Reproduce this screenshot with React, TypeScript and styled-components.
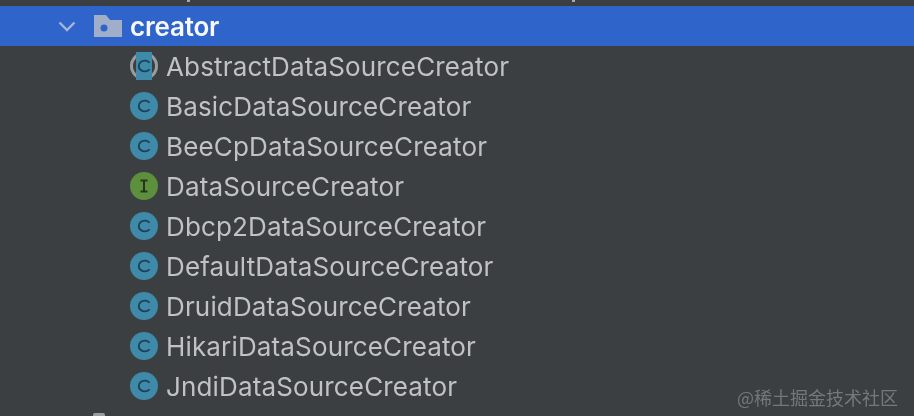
import React from 'react'
import styled, {createGlobalStyle} from 'styled-components'

const GlobalStyle = createGlobalStyle`
  html, body {
    margin: 0;
    padding: 0;
    background: #3c3f41;
  }
`

const names = [
  'BasicDataSourceCreator',
  'BeeCpDataSourceCreator',
  'DataSourceCreator',
  'Dbcp2DataSourceCreator',
  'DefaultDataSourceCreator',
  'DruidDataSourceCreator',
  'HikariDataSourceCreator',
  'JndiDataSourceCreator',
]

const C_PATH = 'M19.6 10.8A6 5.4 0 1 0 19.6 17.2'

const ClassIcon: React.FC<{kind: 'class' | 'abstract' | 'interface'}> = ({kind}) => {
  if (kind === 'interface') {
    return (
      <svg width="28" height="28" viewBox="0 0 28 28">
        <circle cx="14" cy="14" r="14" fill="#5d8f3d" />
        <path d="M10.5 8.5h7M14 8.5v11M10.5 19.5h7" stroke="#26361c" strokeWidth="2" fill="none" />
      </svg>
    )
  }
  if (kind === 'abstract') {
    return (
      <svg width="28" height="28" viewBox="0 0 28 28">
        <circle cx="14" cy="14" r="14" fill="#9a9da0" />
        <circle cx="14" cy="14" r="11" fill="#3c3f41" />
        <rect x="6" y="0" width="16" height="28" fill="#3f8aa8" />
        <path d={C_PATH} stroke="#1d3f57" strokeWidth="1.8" fill="none" />
      </svg>
    )
  }
  return (
    <svg width="28" height="28" viewBox="0 0 28 28">
      <circle cx="14" cy="14" r="14" fill="#3f8aa8" />
      <path d={C_PATH} stroke="#1d3f57" strokeWidth="1.8" fill="none" />
    </svg>
  )
}

const App: React.FC = () => {
  return (
    <>
      <GlobalStyle />
      <StyledPage>
        <StyledSliver $left={187} />
        <StyledSliver $left={572} />
        <StyledSelectedRow>
          <svg width="18" height="11" viewBox="0 0 18 11">
            <path d="M1.5 1.5L9 9l7.5-7.5" stroke="#a5b5d8" strokeWidth="2.4" fill="none" />
          </svg>
          <svg width="28" height="22" viewBox="0 0 28 22">
            <path d="M0 0h12l4 5h12v17H0z" fill="#a0aec9" />
            <circle cx="10" cy="13" r="3.5" fill="#2f65ca" />
          </svg>
          <StyledFolderName>creator</StyledFolderName>
        </StyledSelectedRow>
        <StyledList>
          <StyledRow>
            <ClassIcon kind="abstract" />
            <StyledName>AbstractDataSourceCreator</StyledName>
          </StyledRow>
          {names.map((name) => (
            <StyledRow key={name}>
              <ClassIcon kind={name === 'DataSourceCreator' ? 'interface' : 'class'} />
              <StyledName>{name}</StyledName>
            </StyledRow>
          ))}
        </StyledList>
        <StyledNextRowTip />
        <StyledWatermark>@稀土掘金技术社区</StyledWatermark>
      </StyledPage>
    </>
  )
}

const StyledPage = styled.div`
  position: relative;
  width: 914px;
  height: 416px;
  padding-top: 6px;
  box-sizing: border-box;
  overflow: hidden;
  background: #3c3f41;
  font-family: "Inter", "Liberation Sans", sans-serif;
  filter: blur(0.4px);
`

const StyledSliver = styled.div<{$left: number}>`
  position: absolute;
  top: 0;
  left: ${(props) => props.$left}px;
  width: 3px;
  height: 2px;
  background: #a8aaac;
`

const StyledSelectedRow = styled.div`
  display: flex;
  align-items: center;
  height: 40px;
  padding-left: 58px;
  background: #2f65ca;
  svg:first-child {
    margin-right: 18px;
  }
`

const StyledFolderName = styled.span`
  margin-left: 8px;
  margin-top: 1px;
  color: #f6f8fc;
  font-size: 26px;
  font-weight: 600;
  letter-spacing: -0.2px;
`

const StyledList = styled.div`
  display: flex;
  flex-direction: column;
  padding-left: 130px;
`

const StyledRow = styled.div`
  display: flex;
  align-items: center;
  gap: 8px;
  height: 40px;
`

const StyledName = styled.span`
  color: #c0c2c4;
  font-size: 26px;
  letter-spacing: 0.15px;
  margin-top: 1px;
`

const StyledNextRowTip = styled.div`
  position: absolute;
  left: 93px;
  bottom: 0;
  width: 12px;
  height: 3px;
  border-radius: 2px 2px 0 0;
  background: #9a9da0;
`

const StyledWatermark = styled.div`
  position: absolute;
  right: 16px;
  bottom: 6px;
  color: #75787a;
  font-size: 18px;
  font-family: "Noto Sans CJK SC", sans-serif;
`

export default App
